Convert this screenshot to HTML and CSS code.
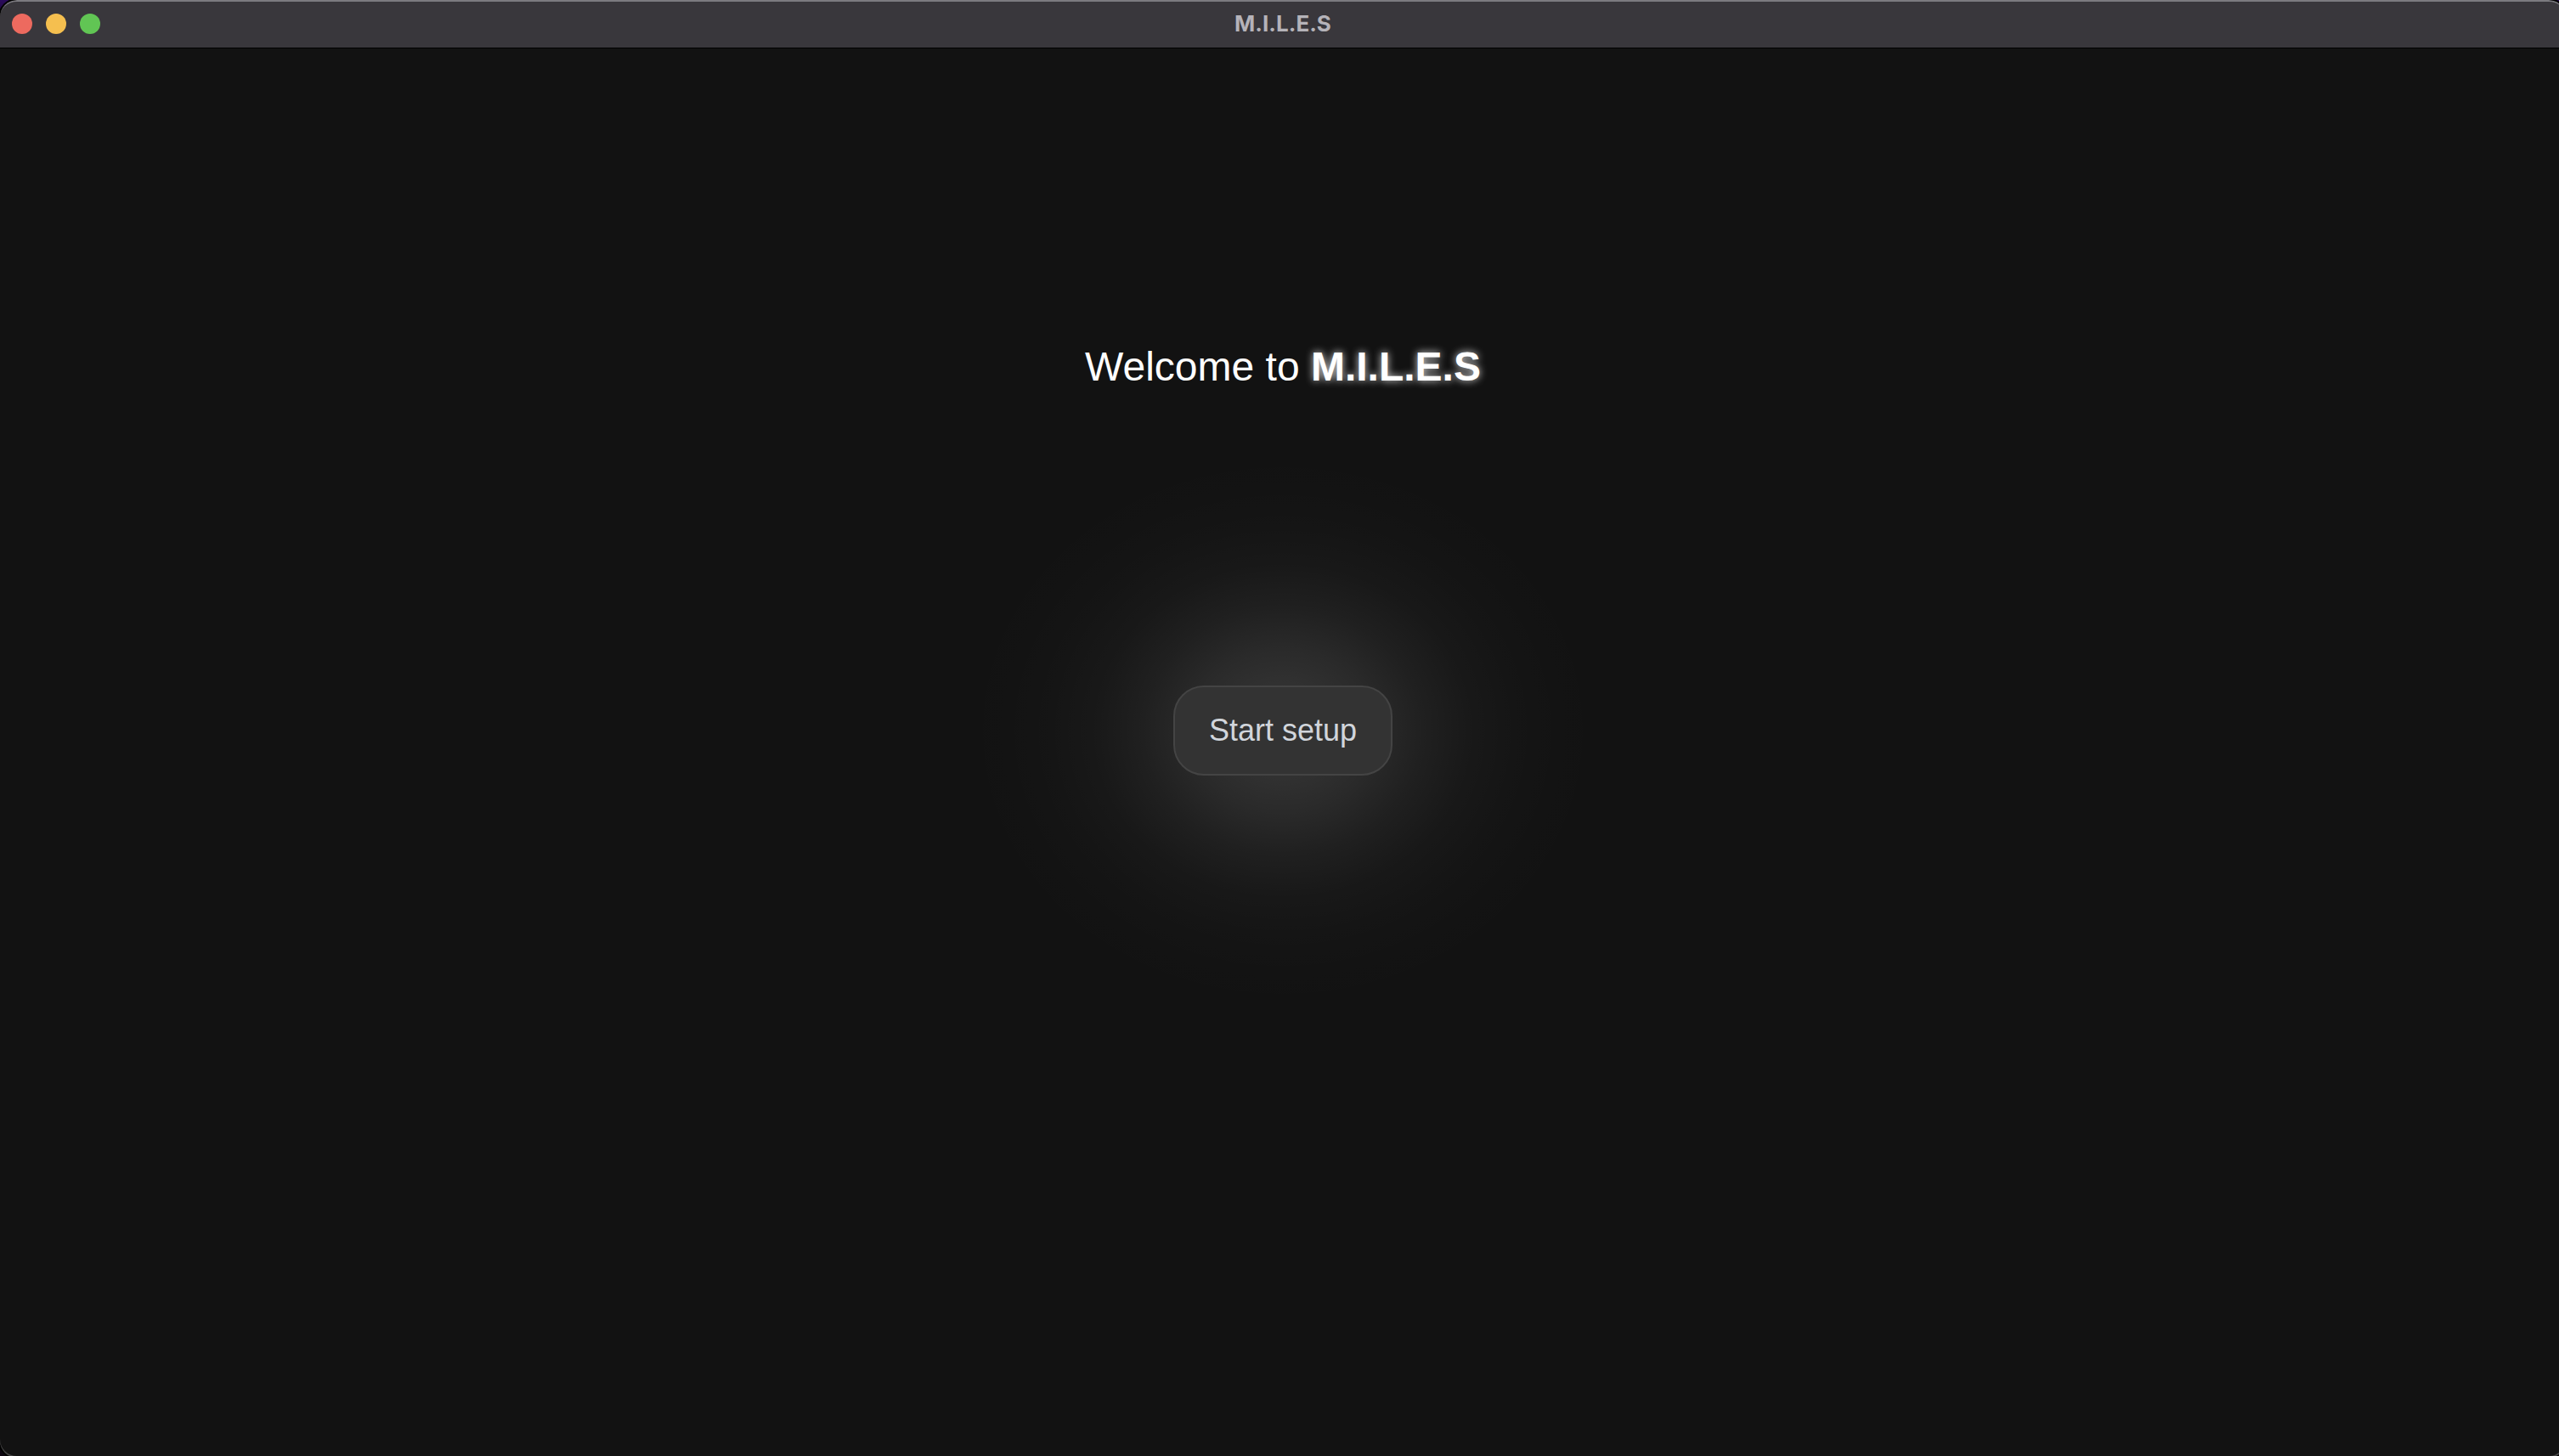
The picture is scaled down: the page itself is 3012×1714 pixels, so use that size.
FILE: index.html
```html
<!DOCTYPE html>
<html lang="en">
<head>
<meta charset="utf-8">
<meta name="viewport" content="width=device-width, initial-scale=1">
<title>M.I.L.E.S</title>
<link rel="stylesheet" href="styles.css">
</head>
<body>
<div class="window">
  <header class="titlebar">
    <div class="controls">
      <button class="control close" type="button" aria-label="Close"></button>
      <button class="control minimize" type="button" aria-label="Minimize"></button>
      <button class="control maximize" type="button" aria-label="Maximize"></button>
    </div>
    <div class="title">M.I.L.E.S</div>
  </header>
  <main class="content">
    <h1 class="welcome">Welcome to <strong class="brand">M.I.L.E.S</strong></h1>
    <button class="start" type="button">Start setup</button>
  </main>
</div>
</body>
</html>
```
FILE: styles.css
```css
* {
  box-sizing: border-box;
}

body {
  margin: 0;
  overflow: hidden;
  background: linear-gradient(#2b0b5c, #0c0610 40px);
  font-family: "Liberation Sans", Arial, sans-serif;
}

/* The window runs slightly past the right and bottom screen edges */
.window {
  display: flex;
  flex-direction: column;
  width: calc(100% + 8px);
  min-height: calc(100vh + 2px);
  border-radius: 20px;
  overflow: hidden;
  background: #121212;
  box-shadow: 0 0 0 2px #000, inset 0 -2px 0 #444;
}

.titlebar {
  display: grid;
  grid-template-columns: 1fr auto 1fr;
  align-items: center;
  height: 57px;
  padding: 0 14px 2px;
  border-top: 2px solid #7b7a7f;
  border-bottom: 1px solid #000;
  border-radius: 20px 20px 0 0;
  background: #39373c;
}

.controls {
  display: flex;
  gap: 16px;
}

.control {
  width: 24px;
  height: 24px;
  padding: 0;
  border: 0;
  border-radius: 50%;
}

.close {
  background: #ed6a5f;
}

.minimize {
  background: #f5bf4f;
}

.maximize {
  background: #61c554;
}

.title {
  color: #b5b3b9;
  font: 700 26px/32px Inter, sans-serif;
}

.content {
  display: flex;
  flex-direction: column;
  align-items: center;
  gap: 347px;
  padding-top: 347px;
  isolation: isolate;
}

.welcome {
  margin: 0;
  color: #fff;
  font-size: 48px;
  font-weight: 400;
  line-height: 56px;
}

.brand {
  font-weight: 700;
  text-shadow: 0 0 10px rgba(255, 255, 255, 0.85);
}

.start {
  position: relative;
  padding: 30px 40px;
  border: 2px solid #444;
  border-radius: 36px;
  background: #333;
  color: #d1d5db;
  font: 400 36px/42px "Liberation Sans", Arial, sans-serif;
}

/* Soft glow behind the button */
.start::before {
  content: "";
  position: absolute;
  z-index: -1;
  inset: -280px -250px;
  background: radial-gradient(
    closest-side,
    rgba(255, 255, 255, 0.15) 0%,
    rgba(255, 255, 255, 0.132) 16%,
    rgba(255, 255, 255, 0.1) 29%,
    rgba(255, 255, 255, 0.058) 44%,
    rgba(255, 255, 255, 0.028) 59%,
    rgba(255, 255, 255, 0.01) 74%,
    rgba(255, 255, 255, 0.003) 88%,
    rgba(255, 255, 255, 0) 100%
  );
  pointer-events: none;
}
```
